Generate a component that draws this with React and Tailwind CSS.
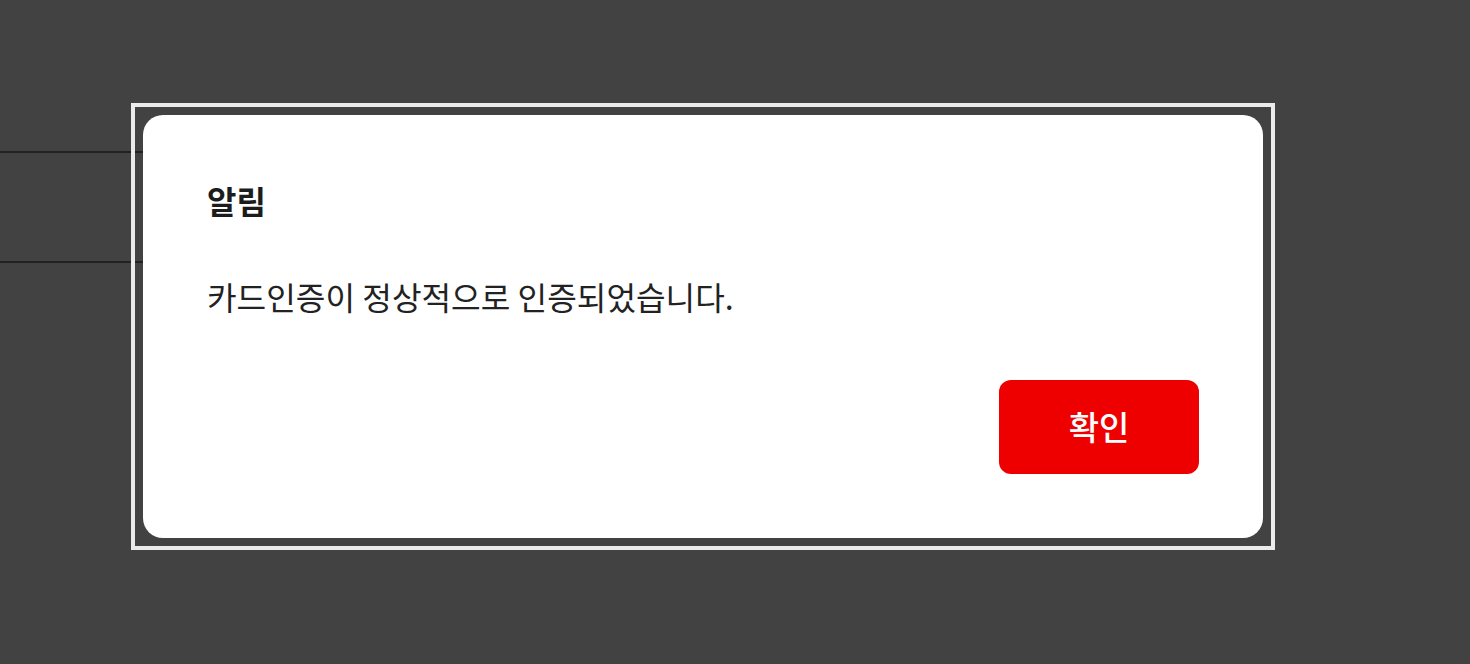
import React from "react";

const AlertModal = ({ title, message, onConfirm }) => {
  return (
    <div className="absolute left-[131px] top-[103px] border-4 border-[#ebebeb] p-2">
      <div className="w-[1120px] h-[423px] bg-white rounded-[20px] p-16 flex flex-col">
        <h2 className="text-[32px] leading-[42px] font-bold text-[#1c1c1c]">{title}</h2>
        <p className="mt-[54px] text-[32.2px] leading-[42px] text-[#222]">{message}</p>
        <div className="mt-auto flex justify-end">
          <button
            onClick={onConfirm}
            className="w-[200px] h-[94px] rounded-[12px] bg-[#ee0000] text-white text-[33px] font-medium"
          >
            확인
          </button>
        </div>
      </div>
    </div>
  );
};

export default function App() {
  return (
    <div
      className="relative w-full h-[664px] bg-[#424242] overflow-hidden"
      style={{ fontFamily: '"Noto Sans CJK KR", "Noto Sans", sans-serif' }}
    >
      {/* rows of the page under the dimmed overlay */}
      <div className="pt-[151px] w-[143px]">
        <div className="h-[2px] bg-[#222]" />
        <div className="h-[108px]" />
        <div className="h-[2px] bg-[#222]" />
      </div>

      <AlertModal title="알림" message="카드인증이 정상적으로 인증되었습니다." />
    </div>
  );
}
